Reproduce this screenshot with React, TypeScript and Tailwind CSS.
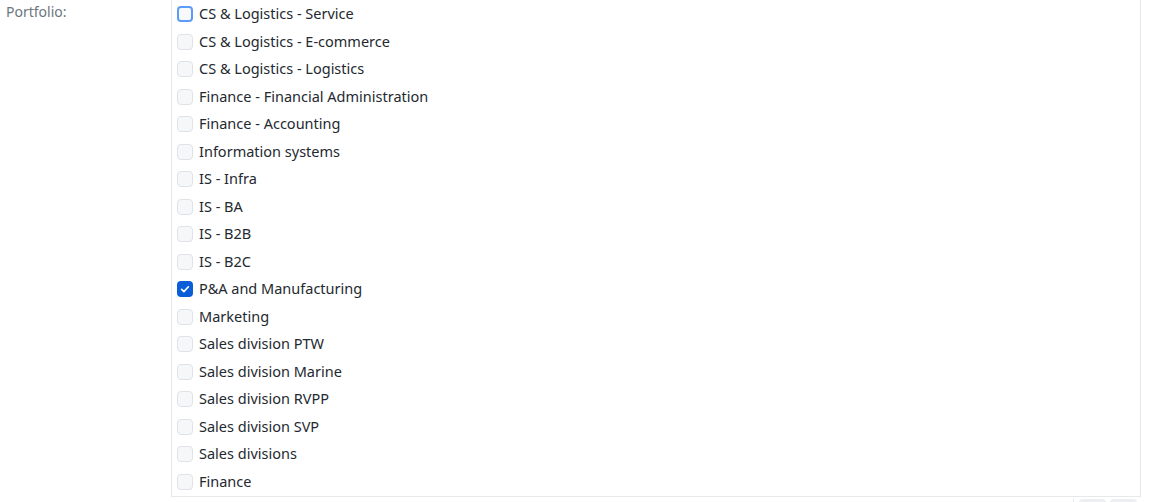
const portfolios = [
  { label: "CS & Logistics - Service", focus: true },
  { label: "CS & Logistics - E-commerce" },
  { label: "CS & Logistics - Logistics" },
  { label: "Finance - Financial Administration" },
  { label: "Finance - Accounting" },
  { label: "Information systems" },
  { label: "IS - Infra" },
  { label: "IS - BA" },
  { label: "IS - B2B" },
  { label: "IS - B2C" },
  { label: "P&A and Manufacturing", checked: true },
  { label: "Marketing" },
  { label: "Sales division PTW" },
  { label: "Sales division Marine" },
  { label: "Sales division RVPP" },
  { label: "Sales division SVP" },
  { label: "Sales divisions" },
  { label: "Finance" },
];

function Checkbox({ checked, focus }: { checked?: boolean; focus?: boolean }) {
  if (checked) {
    return (
      <span className="flex h-4 w-4 shrink-0 items-center justify-center rounded-[4px] bg-[#0b5ed7]">
        <svg viewBox="0 0 16 16" className="h-3 w-3" fill="none">
          <path d="M3.5 8.5l3 3 6-6.5" stroke="white" strokeWidth="2.2" strokeLinecap="round" strokeLinejoin="round" />
        </svg>
      </span>
    );
  }
  return (
    <span
      className={
        focus
          ? "h-4 w-4 shrink-0 rounded-[4px] border-2 border-[#5c9cf8] bg-[#f8f9fb]"
          : "h-4 w-4 shrink-0 rounded-[4px] border border-[#dfe2e7] bg-[#f6f7f9]"
      }
    />
  );
}

export default function App() {
  return (
    <div className="h-[502px] w-[1159px] overflow-hidden bg-white font-['Noto_Sans',sans-serif] text-[14.5px]">
      <div className="flex">
        <div className="w-[171px] shrink-0 pl-[6px] pt-[1px] text-[14px] text-[#6c757d]">Portfolio:</div>
        <div className="flex w-[970px] flex-col">
          <div className="border-x border-b border-[#e6e8eb] pt-[0.5px] pb-[0.25px]">
            {portfolios.map((p) => (
              <label key={p.label} className="flex h-[27.5px] items-center gap-[6px] pl-[5px] text-[#24292f]">
                <Checkbox checked={p.checked} focus={p.focus} />
                <span>{p.label}</span>
              </label>
            ))}
          </div>
          <div className="flex justify-end gap-1 pr-[4px] pt-[2px]">
            <div className="h-[8px] w-[2px] border-l border-[#e6e8eb]" />
            <div className="h-[8px] w-[27px] rounded-[4px] bg-[#eceef1]" />
            <div className="h-[8px] w-[27px] rounded-[4px] bg-[#eceef1]" />
          </div>
        </div>
      </div>
    </div>
  );
}
